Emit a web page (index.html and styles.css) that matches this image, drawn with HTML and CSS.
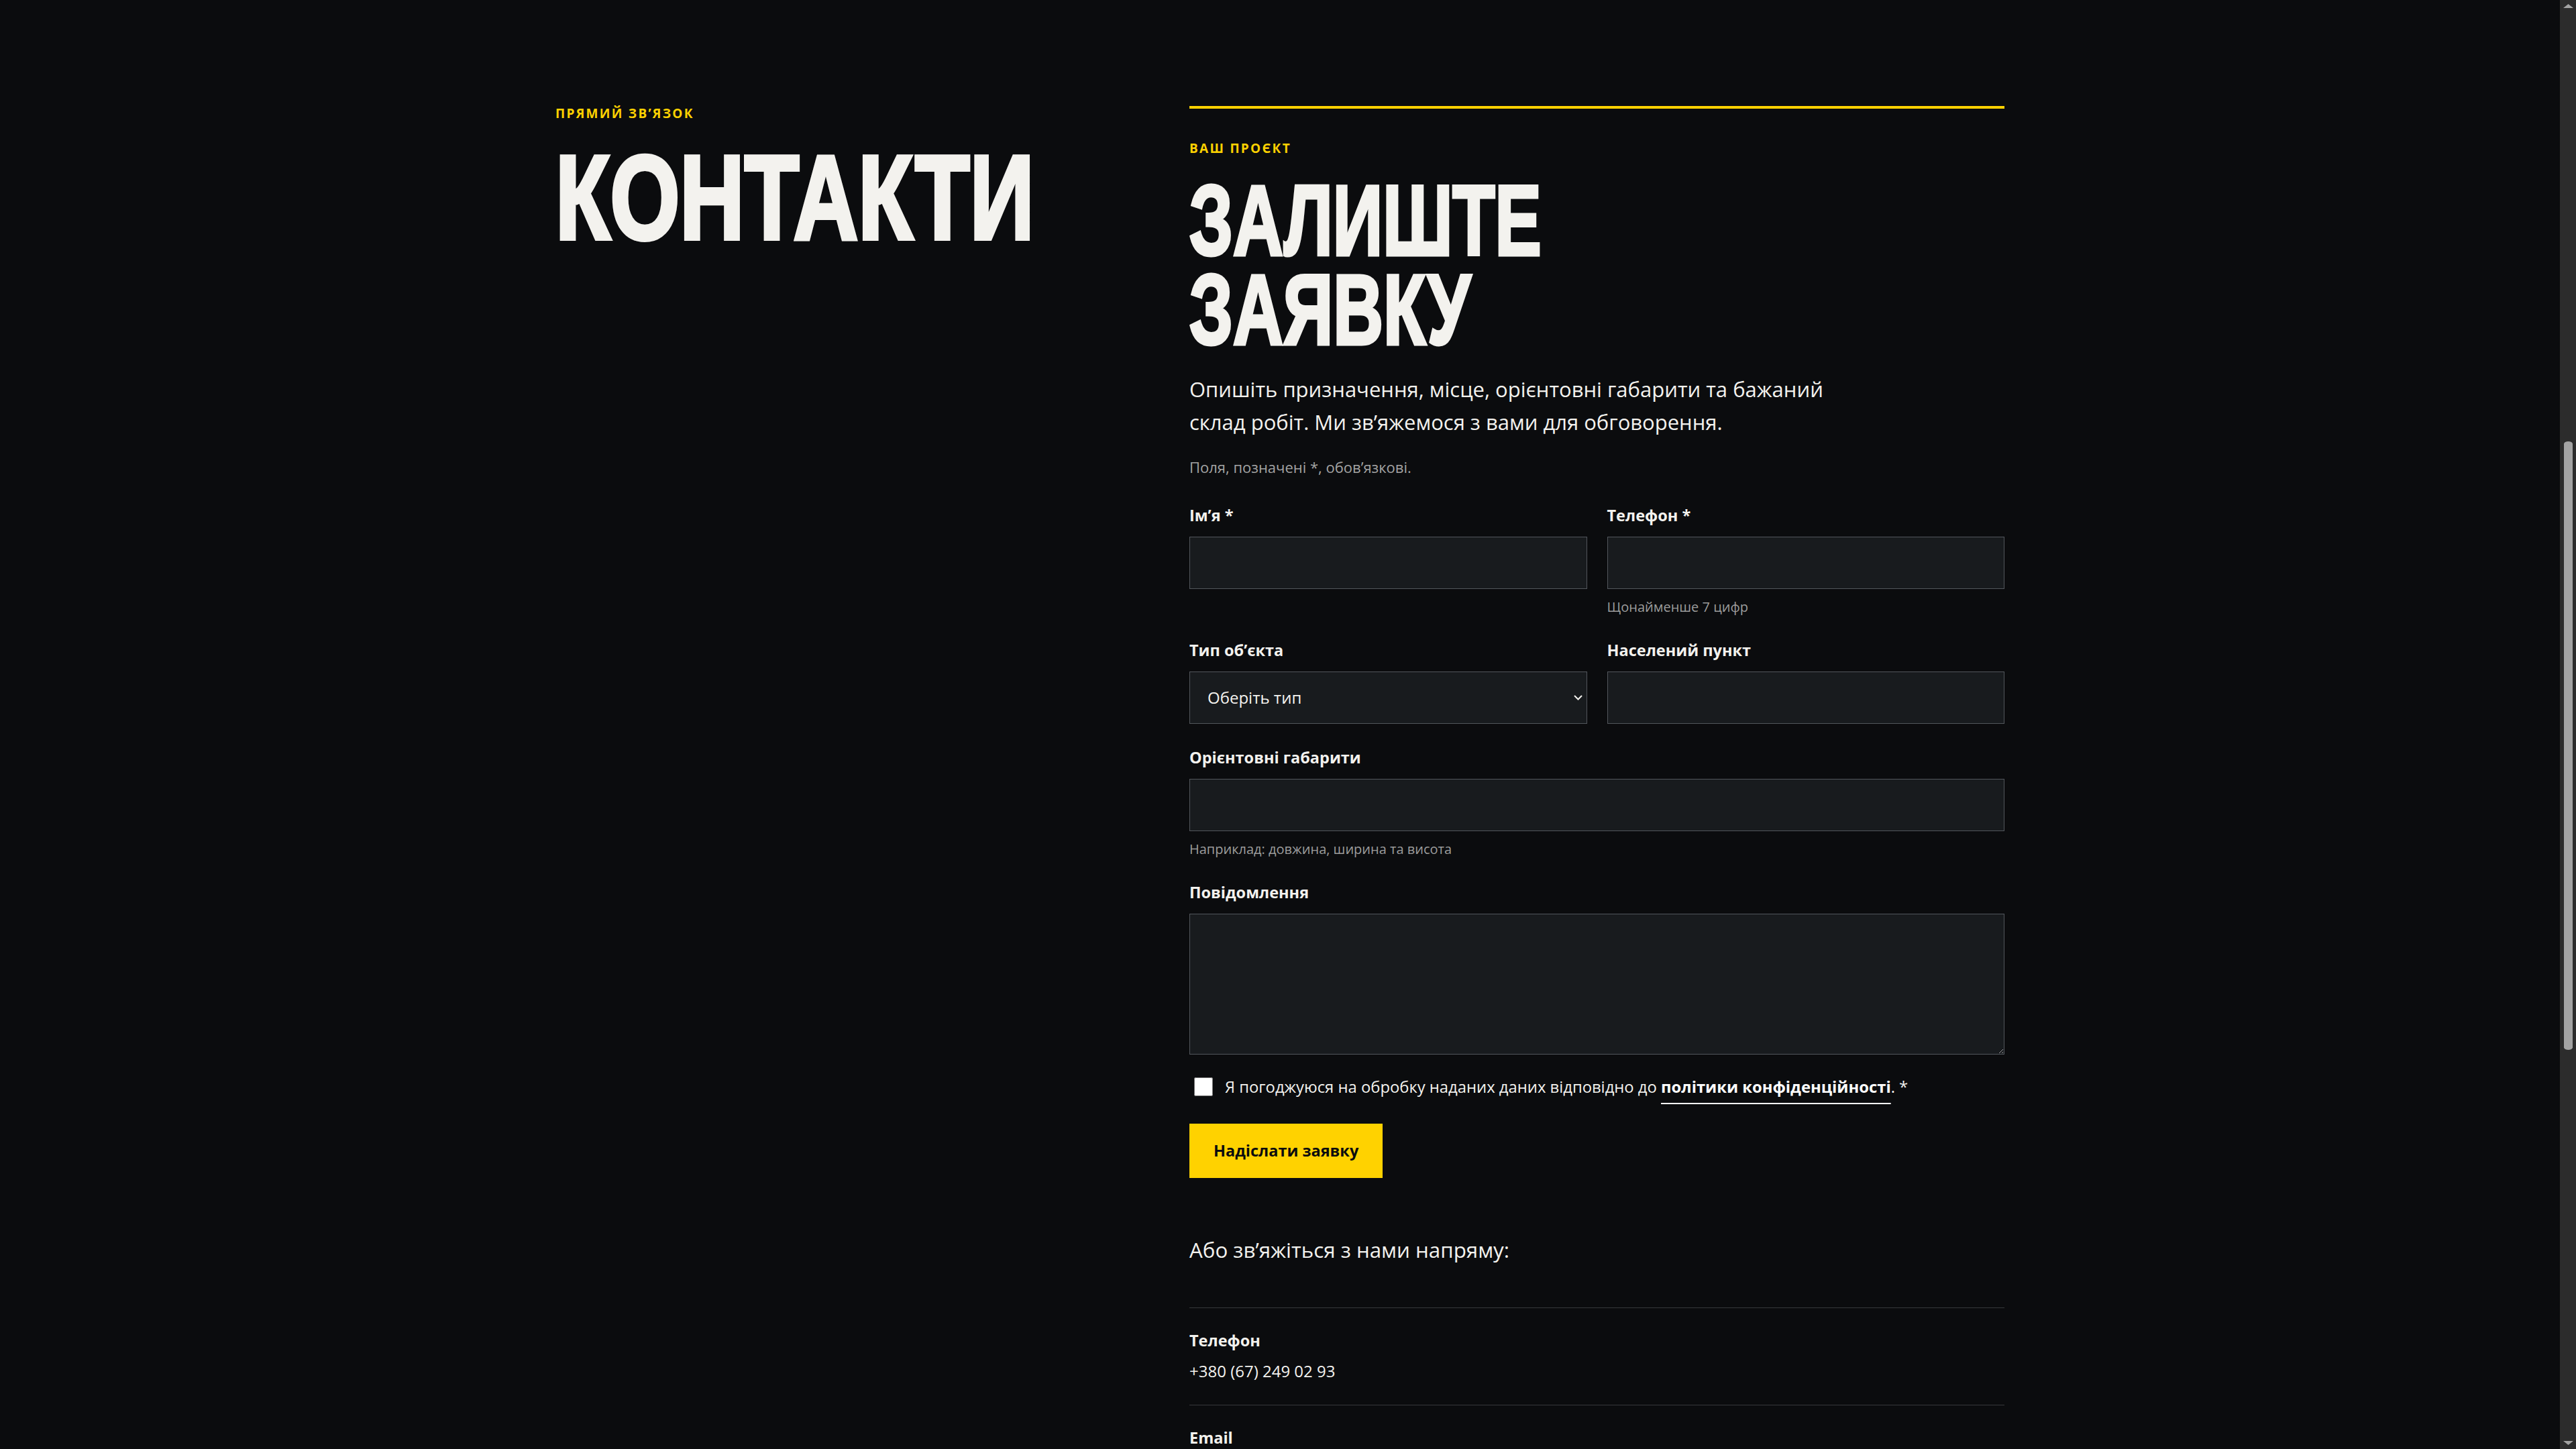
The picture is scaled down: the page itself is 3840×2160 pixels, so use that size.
FILE: index.html
```html
<!DOCTYPE html>
<html lang="uk">
<head>
<meta charset="utf-8">
<title>Контакти</title>
<link rel="stylesheet" href="styles.css">
</head>
<body>
<main class="page">
  <section class="contact">
    <div class="contact__intro">
      <p class="eyebrow">ПРЯМИЙ ЗВ’ЯЗОК</p>
      <h1 class="display display--xl">КОНТАКТИ</h1>
    </div>

    <div class="contact__main">
      <p class="eyebrow">ВАШ ПРОЄКТ</p>
      <h2 class="display display--lg">ЗАЛИШТЕ<br>ЗАЯВКУ</h2>
      <p class="lead">Опишіть призначення, місце, орієнтовні габарити та бажаний склад робіт. Ми зв’яжемося з вами для обговорення.</p>
      <p class="note">Поля, позначені *, обов’язкові.</p>

      <form class="form">
        <div class="field">
          <label class="field__label" for="name">Ім’я *</label>
          <input class="field__control" id="name" type="text">
        </div>
        <div class="field">
          <label class="field__label" for="phone">Телефон *</label>
          <input class="field__control" id="phone" type="tel">
          <span class="field__hint">Щонайменше 7 цифр</span>
        </div>
        <div class="field">
          <label class="field__label" for="type">Тип об’єкта</label>
          <div class="select-wrap">
            <select class="field__control field__control--select" id="type">
              <option>Оберіть тип</option>
            </select>
            <svg class="select-wrap__chevron" viewBox="0 0 13 8" aria-hidden="true"><polyline points="1,1 6.5,6.5 12,1" fill="none" stroke="#f3f2ee" stroke-width="2"/></svg>
          </div>
        </div>
        <div class="field">
          <label class="field__label" for="city">Населений пункт</label>
          <input class="field__control" id="city" type="text">
        </div>
        <div class="field field--wide">
          <label class="field__label" for="size">Орієнтовні габарити</label>
          <input class="field__control" id="size" type="text">
          <span class="field__hint">Наприклад: довжина, ширина та висота</span>
        </div>
        <div class="field field--wide">
          <label class="field__label" for="msg">Повідомлення</label>
          <textarea class="field__control field__control--area" id="msg"></textarea>
        </div>
        <label class="consent">
          <input class="consent__box" type="checkbox">
          <span>Я погоджуюся на обробку наданих даних відповідно до <a class="consent__link" href="#">політики конфіденційності</a>. *</span>
        </label>
        <button class="btn" type="button">Надіслати заявку</button>
      </form>

      <p class="direct">Або зв’яжіться з нами напряму:</p>
      <ul class="contacts">
        <li class="contacts__item">
          <span class="contacts__label">Телефон</span>
          <span class="contacts__value">+380 (67) 249 02 93</span>
        </li>
        <li class="contacts__item">
          <span class="contacts__label">Email</span>
        </li>
      </ul>
    </div>
  </section>
</main>

<div class="scrollbar" aria-hidden="true">
  <svg class="scrollbar__arrow scrollbar__arrow--up" viewBox="0 0 15 6"><polygon points="0,6 7.5,0 15,6" fill="#a3a3a3"/></svg>
  <span class="scrollbar__thumb"></span>
  <svg class="scrollbar__arrow scrollbar__arrow--down" viewBox="0 0 15 6"><polygon points="0,0 7.5,6 15,0" fill="#a3a3a3"/></svg>
</div>
</body>
</html>
```
FILE: styles.css
```css
html {
  background: #0b0c0e;
  scrollbar-width: none;
}

html::-webkit-scrollbar {
  display: none;
}

body {
  margin: 0;
  padding-right: 24px;
  background: #0b0c0e;
  color: #f3f2ee;
  font-family: "Open Sans", "Noto Sans", sans-serif;
}

/* decorative scrollbar lying over the page edge */
.scrollbar {
  position: fixed;
  top: 0;
  right: 0;
  width: 24px;
  height: 100vh;
  background: #2c2c2c;
}

.scrollbar__thumb {
  position: absolute;
  top: 658px;
  left: 6px;
  width: 13px;
  height: 907px;
  background: #a3a3a3;
  border-radius: 7px / 4px;
}

.scrollbar__arrow {
  position: absolute;
  left: 5px;
  width: 15px;
  height: 6px;
}

.scrollbar__arrow--up {
  top: 6px;
}

.scrollbar__arrow--down {
  bottom: 6px;
}

.contact {
  width: 2160px;
  margin: 0 auto;
  padding: 158px 0 600px;
  display: grid;
  grid-template-columns: 825px 1215px;
  column-gap: 120px;
  align-items: start;
}

.eyebrow {
  margin: 0;
  font-size: 19px;
  line-height: 22px;
  font-weight: 700;
  letter-spacing: 0.12em;
  color: #ffd200;
}

.display {
  margin: 0;
  font-family: "Liberation Sans", Arial, sans-serif;
  font-weight: 700;
  color: #f3f2ee;
  -webkit-text-stroke: 6px #f3f2ee;
  transform-origin: 0 0;
}

.display--xl {
  margin-top: 15px;
  font-size: 178px;
  line-height: 200px;
  transform: scaleX(0.75);
}

.display--lg {
  margin-top: 30px;
  font-size: 148px;
  line-height: 133px;
  -webkit-text-stroke-width: 5px;
  transform: scaleX(0.70);
}

.contact__main {
  border-top: 4px solid #ffd200;
  padding-top: 48px;
}

.lead {
  margin: 28px 0 0;
  max-width: 1010px;
  font-size: 31px;
  line-height: 49px;
}

.note {
  margin: 27px 0 0;
  font-size: 22px;
  line-height: 30px;
  color: #a3a3a3;
}

.form {
  margin-top: 41px;
  display: grid;
  grid-template-columns: 1fr 1fr;
  column-gap: 30px;
  row-gap: 34px;
}

.field {
  display: flex;
  flex-direction: column;
}

.field--wide {
  grid-column: 1 / -1;
}

.field__label {
  margin-bottom: 16px;
  font-size: 23.5px;
  line-height: 32px;
  font-weight: 700;
}

.field__control {
  box-sizing: border-box;
  width: 100%;
  height: 78px;
  margin: 0;
  padding: 0 26px;
  background: #181b1e;
  border: 1px solid #52565c;
  border-radius: 0;
  color: #f3f2ee;
  font-family: "Open Sans", "Noto Sans", sans-serif;
  font-size: 24px;
  line-height: 30px;
  outline: none;
}

.field__control--select {
  appearance: none;
  -webkit-appearance: none;
}

.field__control--area {
  height: 210px;
  padding: 20px 26px;
  resize: vertical;
  color-scheme: dark;
}

.field__hint {
  margin-top: 12px;
  font-size: 20px;
  line-height: 29px;
  color: #9c9c9c;
}

.select-wrap {
  position: relative;
}

.select-wrap__chevron {
  position: absolute;
  right: 7px;
  top: 35px;
  width: 13px;
  height: 8px;
  pointer-events: none;
}

.consent {
  grid-column: 1 / -1;
  display: flex;
  align-items: center;
  gap: 18px;
  padding-left: 7px;
  font-size: 23.8px;
  line-height: 28px;
}

.consent__box {
  width: 28px;
  height: 28px;
  margin: 0;
  flex: none;
}

.consent__link {
  color: #ffffff;
  font-weight: 700;
  text-decoration: underline;
  text-decoration-thickness: 2px;
  text-underline-offset: 15px;
}

.btn {
  grid-column: 1 / -1;
  justify-self: start;
  margin-top: 7px;
  height: 81px;
  padding: 0 36px;
  background: #ffd200;
  color: #0b0c0e;
  border: 0;
  border-radius: 0;
  font-family: "Open Sans", "Noto Sans", sans-serif;
  font-size: 23.5px;
  line-height: 31px;
  font-weight: 700;
}

.direct {
  margin: 86px 0 0;
  font-size: 31.3px;
  line-height: 42px;
}

.contacts {
  margin: 65px 0 0;
  padding: 0;
  list-style: none;
}

.contacts__item {
  display: flex;
  flex-direction: column;
  padding: 32px 0 35px;
  border-top: 1px solid #36383b;
}

.contacts__label {
  margin-bottom: 15px;
  font-size: 23.5px;
  line-height: 32px;
  font-weight: 700;
}

.contacts__value {
  font-size: 24px;
  line-height: 30px;
}
```
